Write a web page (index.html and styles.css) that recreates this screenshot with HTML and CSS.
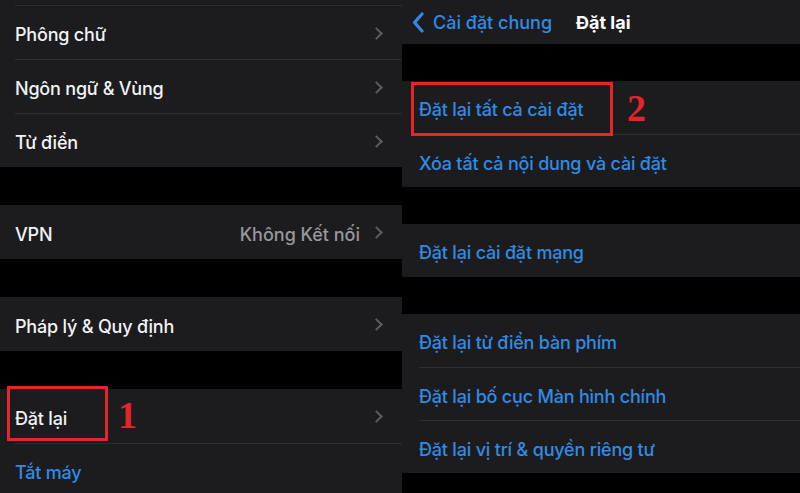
FILE: index.html
```html
<!DOCTYPE html>
<html lang="vi">
<head>
<meta charset="utf-8">
<title>Đặt lại</title>
<link rel="stylesheet" href="styles.css">
</head>
<body>
<div class="screen">
  <section class="panel left">
    <div class="group first">
      <div class="row"><span class="label">Phông chữ</span><span class="chev"></span></div>
      <div class="row"><span class="label">Ngôn ngữ &amp; Vùng</span><span class="chev"></span></div>
      <div class="row"><span class="label">Từ điển</span><span class="chev"></span></div>
    </div>
    <div class="group">
      <div class="row"><span class="label">VPN</span><span class="value">Không Kết nối</span><span class="chev"></span></div>
    </div>
    <div class="group">
      <div class="row"><span class="label">Pháp lý &amp; Quy định</span><span class="chev"></span></div>
    </div>
    <div class="group last">
      <div class="row marked">
        <span class="label">Đặt lại</span><span class="chev"></span>
        <span class="box box1"></span><span class="num num1">1</span>
      </div>
      <div class="row"><span class="label blue">Tắt máy</span></div>
    </div>
  </section>
  <section class="panel right">
    <header class="nav">
      <span class="back"><svg width="12" height="21" viewBox="0 0 12 21"><path d="M10 2 L2.5 10.5 L10 19" fill="none" stroke="#2f88e8" stroke-width="3.2" stroke-linecap="round" stroke-linejoin="round"/></svg>Cài đặt chung</span>
      <span class="title">Đặt lại</span>
    </header>
    <div class="group">
      <div class="row marked"><span class="label blue">Đặt lại tất cả cài đặt</span>
        <span class="box box2"></span><span class="num num2">2</span></div>
      <div class="row"><span class="label blue">Xóa tất cả nội dung và cài đặt</span></div>
    </div>
    <div class="group">
      <div class="row"><span class="label blue">Đặt lại cài đặt mạng</span></div>
    </div>
    <div class="group">
      <div class="row"><span class="label blue">Đặt lại từ điển bàn phím</span></div>
      <div class="row"><span class="label blue">Đặt lại bố cục Màn hình chính</span></div>
      <div class="row"><span class="label blue">Đặt lại vị trí &amp; quyền riêng tư</span></div>
    </div>
  </section>
</div>
</body>
</html>
```
FILE: styles.css
```css
* { box-sizing: border-box; }
html, body { margin: 0; padding: 0; background: #000; }
.screen {
  width: 800px; height: 493px; overflow: hidden;
  display: flex; background: #000;
  font-family: Inter, "Noto Sans", sans-serif;
  font-size: 18px; font-weight: 500; color: #f2f2f4;
}
.panel { display: flex; flex-direction: column; }
.left { width: 402px; gap: 38px; }
.right { width: 398px; gap: 37px; }
.group { background: #1c1c1e; }
.left .first { padding-top: 5px; }
.left .last { flex: 1; }
.row {
  position: relative; height: 54px;
  display: flex; align-items: center;
  margin-left: 15px; padding-right: 16px; padding-top: 4px;
  border-top: 1px solid #2e2e31;
}
.group .row:first-child { border-top: none; }
.left .first .row:first-child { border-top: 1px solid #2e2e31; }
.right .row { height: 53px; margin-left: 17px; }
.label { flex: 1; white-space: nowrap; letter-spacing: -0.2px; }
.blue { color: #318be4; }
.value { color: #97979c; margin-right: 12px; }
.chev {
  width: 9px; height: 9px; margin-right: 5px; margin-top: -3px;
  border-right: 2.4px solid #5d5d61; border-top: 2.4px solid #5d5d61;
  transform: rotate(45deg);
}
.nav {
  height: 44px; background: #1c1c1e;
  display: flex; align-items: center; padding-left: 10px; padding-top: 1px;
}
.back { display: flex; align-items: center; gap: 9px; color: #318be4; }
.back svg { display: block; }
.title { margin-left: 24px; font-weight: 700; color: #fff; }
.box { position: absolute; z-index: 1; border: 3px solid #e5242b; }
.box1 { left: -8px; top: -3px; width: 101px; height: 55px; }
.box2 { left: -8px; top: 1px; width: 202px; height: 54px; }
.num {
  position: absolute; z-index: 1; font-family: "Liberation Serif", serif; font-weight: 700;
  font-size: 38px; color: #e0262b; line-height: 1;
}
.num1 { left: 103px; top: 7px; }
.num2 { left: 208px; top: 8px; }
```
